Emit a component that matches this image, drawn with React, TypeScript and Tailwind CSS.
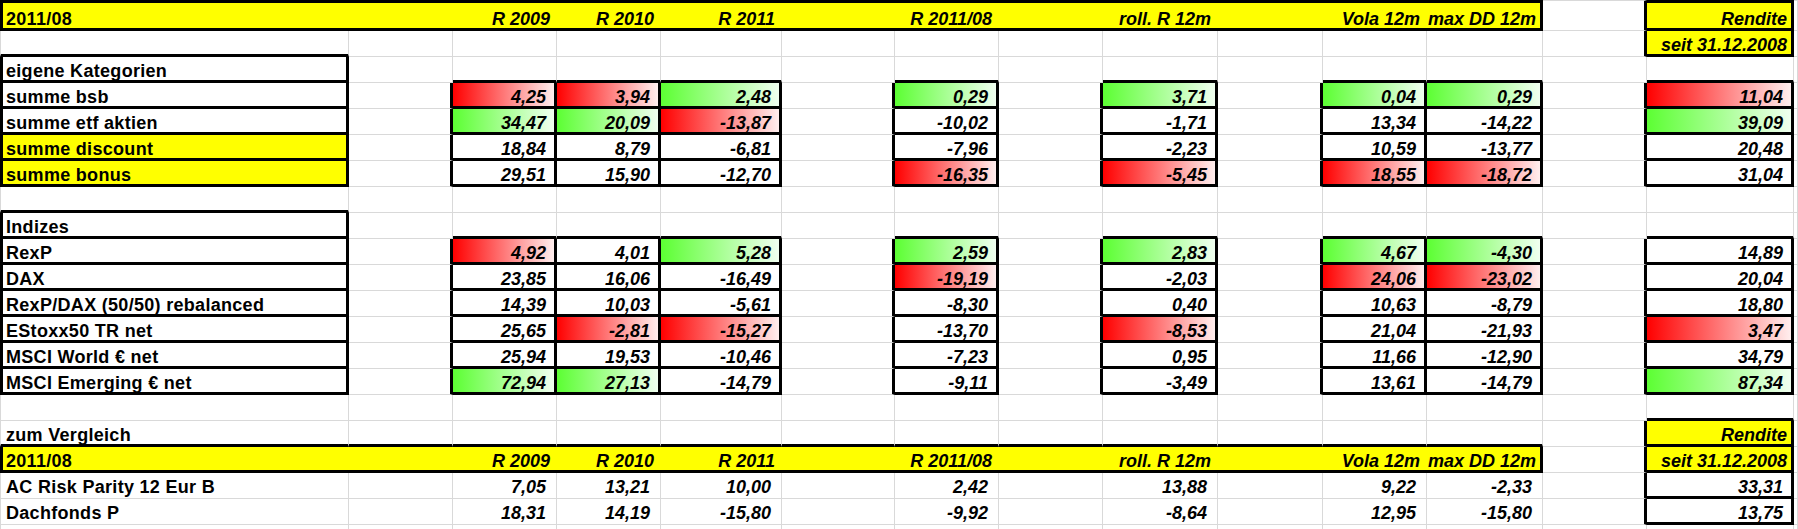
import React from "react";

type Fill = "none" | "yellow" | "red" | "green";
type Kind = "label" | "num" | "head" | "empty";
interface Cell {
  text: string;
  kind: Kind;
  fill: Fill;
  g: string | null;
}

const NCOLS = 15;
const NROWS = 21;
const DATA_COLS = [2, 3, 4, 6, 8, 10, 11, 13];
const HEADS = ["R 2009", "R 2010", "R 2011", "R 2011/08", "roll. R 12m", "Vola 12m", "max DD 12m"];

function emptyRow(): Cell[] {
  return Array.from({ length: NCOLS }, () => ({ text: "", kind: "empty" as Kind, fill: "none" as Fill, g: null }));
}

const grid: Cell[][] = Array.from({ length: NROWS }, () => emptyRow());

function header(r: number, ntext: string) {
  for (let c = 0; c <= 11; c++) {
    grid[r][c] = { text: "", kind: "empty", fill: "yellow", g: `h${r}` };
  }
  grid[r][0] = { text: "2011/08", kind: "label", fill: "yellow", g: `h${r}` };
  HEADS.forEach((h, i) => {
    grid[r][DATA_COLS[i]] = { text: h, kind: "head", fill: "yellow", g: `h${r}` };
  });
  grid[r][13] = { text: ntext, kind: "head", fill: "yellow", g: `n${r}` };
}

function dataRow(r: number, label: string, vals: string[], opts: { boxed: boolean; yellow?: boolean }) {
  grid[r][0] = {
    text: label,
    kind: "label",
    fill: opts.yellow ? "yellow" : "none",
    g: opts.boxed ? `a${r}` : null,
  };
  vals.forEach((v, i) => {
    let fill: Fill = "none";
    let t = v;
    if (v.endsWith("r")) {
      fill = "red";
      t = v.slice(0, -1);
    } else if (v.endsWith("g")) {
      fill = "green";
      t = v.slice(0, -1);
    }
    const c = DATA_COLS[i];
    const boxed = opts.boxed || c === 13;
    grid[r][c] = { text: t, kind: "num", fill, g: boxed ? `c${r}_${c}` : null };
  });
}

header(0, "Rendite");
grid[1][13] = { text: "seit 31.12.2008", kind: "head", fill: "yellow", g: "n1" };
grid[2][0] = { text: "eigene Kategorien", kind: "label", fill: "none", g: "a2" };
dataRow(3, "summe bsb", ["4,25r", "3,94r", "2,48g", "0,29g", "3,71g", "0,04g", "0,29g", "11,04r"], { boxed: true });
dataRow(4, "summe etf aktien", ["34,47g", "20,09g", "-13,87r", "-10,02", "-1,71", "13,34", "-14,22", "39,09g"], { boxed: true });
dataRow(5, "summe discount", ["18,84", "8,79", "-6,81", "-7,96", "-2,23", "10,59", "-13,77", "20,48"], { boxed: true, yellow: true });
dataRow(6, "summe bonus", ["29,51", "15,90", "-12,70", "-16,35r", "-5,45r", "18,55r", "-18,72r", "31,04"], { boxed: true, yellow: true });
grid[8][0] = { text: "Indizes", kind: "label", fill: "none", g: "a8" };
dataRow(9, "RexP", ["4,92r", "4,01", "5,28g", "2,59g", "2,83g", "4,67g", "-4,30g", "14,89"], { boxed: true });
dataRow(10, "DAX", ["23,85", "16,06", "-16,49", "-19,19r", "-2,03", "24,06r", "-23,02r", "20,04"], { boxed: true });
dataRow(11, "RexP/DAX (50/50) rebalanced", ["14,39", "10,03", "-5,61", "-8,30", "0,40", "10,63", "-8,79", "18,80"], { boxed: true });
dataRow(12, "EStoxx50 TR net", ["25,65", "-2,81r", "-15,27r", "-13,70", "-8,53r", "21,04", "-21,93", "3,47r"], { boxed: true });
dataRow(13, "MSCI World € net", ["25,94", "19,53", "-10,46", "-7,23", "0,95", "11,66", "-12,90", "34,79"], { boxed: true });
dataRow(14, "MSCI Emerging € net", ["72,94g", "27,13g", "-14,79", "-9,11", "-3,49", "13,61", "-14,79", "87,34g"], { boxed: true });
grid[16][0] = { text: "zum Vergleich", kind: "label", fill: "none", g: null };
grid[16][13] = { text: "Rendite", kind: "head", fill: "yellow", g: "n16" };
header(17, "seit 31.12.2008");
dataRow(18, "AC Risk Parity 12 Eur B", ["7,05", "13,21", "10,00", "2,42", "13,88", "9,22", "-2,33", "33,31"], { boxed: false });
dataRow(19, "Dachfonds P", ["18,31", "14,19", "-15,80", "-9,92", "-8,64", "12,95", "-15,80", "13,75"], { boxed: false });

type Line = 0 | 1 | 3;
function between(a: Cell | undefined, b: Cell | undefined): Line {
  const ga = a ? a.g : null;
  const gb = b ? b.g : null;
  if ((ga || gb) && ga !== gb) return 3;
  if (ga && ga === gb) return 0;
  return 1;
}

const R_CLS: Record<Line, string> = {
  0: "border-r-0",
  1: "border-r border-r-[#d9d9d9]",
  3: "border-r-[3px] border-r-black",
};
const B_CLS: Record<Line, string> = {
  0: "border-b-0",
  1: "border-b border-b-[#d9d9d9]",
  3: "border-b-[3px] border-b-black",
};
const L_CLS: Record<Line, string> = {
  0: "border-l-0",
  1: "border-l border-l-[#d9d9d9]",
  3: "border-l-[3px] border-l-black",
};
const T_CLS: Record<Line, string> = {
  0: "border-t-0",
  1: "border-t border-t-[#d9d9d9]",
  3: "border-t-[3px] border-t-black",
};
const PB: Record<Line, string> = { 0: "pb-[3px]", 1: "pb-[2px]", 3: "pb-0" };
const PR_NUM: Record<Line, string> = { 0: "pr-[11px]", 1: "pr-[10px]", 3: "pr-[8px]" };
const PR_HEAD: Record<Line, string> = { 0: "pr-[7px]", 1: "pr-[6px]", 3: "pr-[4px]" };
const PL_LAB: Record<Line, string> = { 0: "pl-[6px]", 1: "pl-[5px]", 3: "pl-[3px]" };

const FILL: Record<Fill, string> = {
  none: "bg-white",
  yellow: "bg-[#ffff00]",
  red: "bg-[linear-gradient(to_right,#ff0000,#ffeeee)]",
  green: "bg-[linear-gradient(to_right,#5cff33,#f0fff0)]",
};

function CellView({ r, c }: { r: number; c: number }) {
  const cell = grid[r][c];
  const right = between(cell, grid[r][c + 1]);
  const bottom = between(cell, grid[r + 1] ? grid[r + 1][c] : undefined);
  const left: Line | null = c === 0 ? (cell.g ? 3 : 1) : null;
  const top: Line | null = r === 0 ? (cell.g ? 3 : 1) : null;

  const cls = [
    "flex items-end min-w-0 overflow-visible whitespace-nowrap",
    FILL[cell.fill],
    R_CLS[right],
    B_CLS[bottom],
    left !== null ? L_CLS[left] : "",
    top !== null ? T_CLS[top] : "",
    PB[bottom],
  ];
  if (cell.kind === "num") {
    cls.push("justify-end italic", PR_NUM[right]);
  } else if (cell.kind === "head") {
    cls.push("justify-end italic", PR_HEAD[right]);
  } else if (cell.kind === "label") {
    cls.push("justify-start tracking-[0.3px]", PL_LAB[left ?? 0]);
  }
  return (
    <div className={cls.join(" ")}>
      {cell.text ? <span className="leading-none">{cell.text}</span> : null}
    </div>
  );
}

export default function App() {
  return (
    <div className="h-[529px] w-[1798px] overflow-hidden bg-white">
      <div
        className="grid grid-cols-[349px_104px_104px_104px_121px_113px_104px_104px_115px_105px_104px_116px_104px_147px_4px] grid-rows-[31px_repeat(20,26px)] font-['Liberation_Sans',Arial,sans-serif] text-[18px] font-bold text-black"
      >
        {grid.map((row, r) => row.map((_, c) => <CellView key={`${r}-${c}`} r={r} c={c} />))}
      </div>
    </div>
  );
}
